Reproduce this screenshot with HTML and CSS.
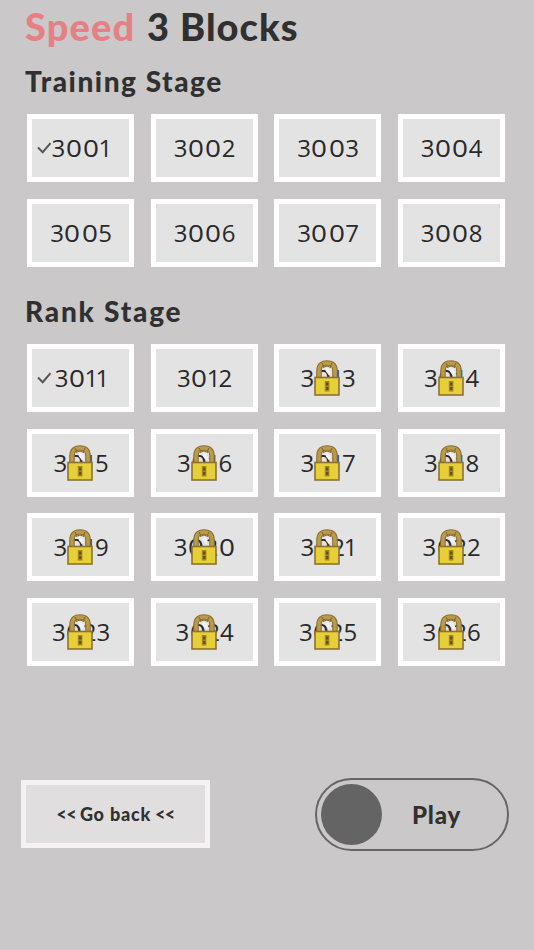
FILE: index.html
```html
<!DOCTYPE html>
<html lang="en">
<head>
    <meta charset="UTF-8">
    <meta name="viewport" content="width=device-width, initial-scale=1.0">
    <title>Speed 3 Blocks</title>
    <link rel="stylesheet" href="styles.css">
</head>
<body>

    <svg width="0" height="0" class="symbols">
        <symbol id="lock" viewBox="0 0 26 36">
            <path d="M5 18V11C5 4.5 8.5 3 13 3S21 4.5 21 11V18" fill="none" stroke="#8d7136" stroke-width="5.6"/>
            <path d="M5 18V11C5 4.5 8.5 3 13 3S21 4.5 21 11V18" fill="none" stroke="#b99b49" stroke-width="3.4"/>
            <path d="M8 3l2 4M18 3l-2 4M9 7.5q4-3 8 0" fill="none" stroke="#806329" stroke-width="1"/>
            <path d="M11.5 8l4 1 1.5 4-2 2.5-3-4z" fill="#f5eff2"/>
            <rect x="1" y="17.5" width="24" height="17.5" fill="#e7cf37" stroke="#8d7133" stroke-width="1.6"/>
            <rect x="10.8" y="21" width="4.6" height="10.5" fill="#a28723"/>
            <path d="M12 22.5h2.4v3H12zM12 27h2.4v3H12z" fill="#685115"/>
        </symbol>
        <symbol id="check" viewBox="0 0 15 12">
            <path d="M1 5.5L5.7 10.2L13.5 1.2" fill="none" stroke="#555" stroke-width="2"/>
        </symbol>
    </svg>

    <div class="page">
        <h1 class="title"><span class="speed">Speed</span> <span class="three">3</span> <span class="blocks">Blocks</span></h1>

        <h2 class="training">Training Stage</h2>
        <div class="stages" id="training"></div>

        <h2 class="rank">Rank Stage</h2>
        <div class="stages" id="rank"></div>

        <div class="footer">
            <button class="back">&lt;&lt; <span>Go back</span> &lt;&lt;</button>
            <button class="play"><span class="knob"></span><span class="play_text">Play</span></button>
        </div>
    </div>

    <script>
        const cleared = [3001, 3011];
        const first_locked = 3013;

        function add_stages(id, from, to) {
            const box = document.getElementById(id);
            for (let n = from; n <= to; n++) {
                const digits = String(n).split('').map(d => `<span class="d d${d}">${d}</span>`).join('');
                let html = `<span class="number">${digits}</span>`;
                if (cleared.includes(n)) {
                    html += '<svg class="check"><use href="#check"/></svg>';
                }
                if (n >= first_locked) {
                    html += '<svg class="lock"><use href="#lock"/></svg>';
                }
                box.innerHTML += `<button class="stage">${html}</button>`;
            }
        }
        add_stages('training', 3001, 3008);
        add_stages('rank', 3011, 3026);
    </script>

</body>
</html>
```

FILE: styles.css
```css
body {
    margin: 0;
    background-color: #cac8c9;
    color: #303030;
    font-family: Lato, sans-serif;
}
.symbols {
    display: block;
}
.page {
    box-sizing: border-box;
    height: 950px;
    padding: 1px 25px 0 21px;
}
h1, h2 {
    margin: 0 0 0 4px;
    font-weight: 900;
    white-space: nowrap;
}
.title {
    display: flex;
    height: 50px;
    font-size: 38px;
    line-height: 50px;
}
.speed {
    width: 122px;
    color: #e58184;
    letter-spacing: 1.1px;
}
.three {
    width: 33px;
}
.blocks {
    letter-spacing: 1px;
}
h2 {
    height: 36px;
    font-size: 28px;
    line-height: 36px;
}
.training {
    margin-top: 12px;
    letter-spacing: 1.55px;
}
.rank {
    margin-top: 26.4px;
    letter-spacing: 1.8px;
}
.stages {
    display: grid;
    grid-template-columns: repeat(4, 107px);
    column-gap: 16.5px;
    row-gap: 16.7px;
    margin: 15px 0 0 6px;
}
.stage {
    position: relative;
    display: flex;
    justify-content: center;
    align-items: center;
    height: 68px;
    padding: 0;
    border: 5px solid #fff;
    background-color: #e3e3e3;
    color: #292929;
    font-family: "Open Sans", sans-serif;
    font-size: 24px;
    line-height: 34px;
}
.number {
    display: flex;
    margin-left: 1px;
}
.d {
    display: inline-block;
    width: 13.6px;
    text-align: center;
}
.d0 {
    width: 14px;
    margin: 0 1.6px;
    transform: scaleX(1.16);
}
.d1 {
    width: 10.8px;
    text-indent: -1px;
}
.check {
    position: absolute;
    left: 5px;
    top: 23px;
    width: 15px;
    height: 12px;
}
.lock {
    position: absolute;
    left: 35px;
    top: 11px;
    width: 26px;
    height: 36px;
}
.footer {
    display: flex;
    justify-content: space-between;
    margin-top: 111.6px;
}
.back {
    width: 189px;
    height: 68px;
    margin-top: 2px;
    padding: 0;
    border: 5px solid #f6f2f3;
    background-color: #e0dedf;
    color: #303030;
    font-family: Lato, sans-serif;
    font-size: 18px;
    font-weight: 900;
    letter-spacing: -0.5px;
}
.back span {
    letter-spacing: 0.8px;
}
.play {
    display: flex;
    align-items: center;
    width: 194px;
    height: 73px;
    padding: 0 0 0 4px;
    border: 2px solid #666;
    border-radius: 37px;
    background: none;
    color: #303030;
    font-family: Lato, sans-serif;
    font-size: 24px;
    font-weight: 900;
    letter-spacing: 0.8px;
}
.knob {
    width: 61px;
    height: 61px;
    border-radius: 50%;
    background-color: #646464;
}
.play_text {
    margin-left: 30px;
}
```
